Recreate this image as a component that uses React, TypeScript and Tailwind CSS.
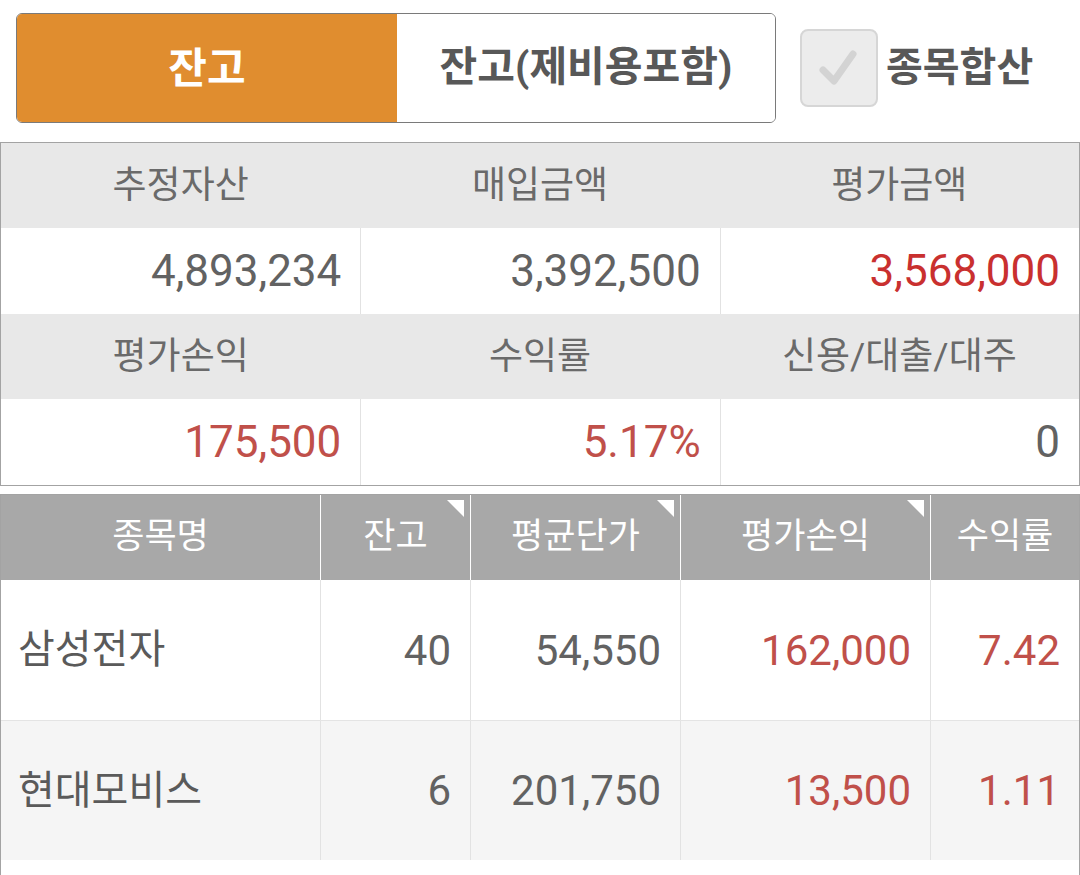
const FONT = "font-['Roboto','Noto_Sans_CJK_KR',sans-serif]";

type Cell = { label: string; value: string; tone?: "red" | "dark-red" };

const summary: Cell[][] = [
  [
    { label: "추정자산", value: "4,893,234" },
    { label: "매입금액", value: "3,392,500" },
    { label: "평가금액", value: "3,568,000", tone: "dark-red" },
  ],
  [
    { label: "평가손익", value: "175,500", tone: "red" },
    { label: "수익률", value: "5.17%", tone: "red" },
    { label: "신용/대출/대주", value: "0" },
  ],
];

const columns = [
  { label: "종목명", sort: false },
  { label: "잔고", sort: true },
  { label: "평균단가", sort: true },
  { label: "평가손익", sort: true },
  { label: "수익률", sort: false },
];

const holdings = [
  { name: "삼성전자", qty: "40", avg: "54,550", pnl: "162,000", rate: "7.42" },
  { name: "현대모비스", qty: "6", avg: "201,750", pnl: "13,500", rate: "1.11" },
];

function toneClass(tone?: Cell["tone"]) {
  if (tone === "dark-red") return "text-[#c9302f]";
  if (tone === "red") return "text-[#c0504a]";
  return "text-[#626262]";
}

function SortMark() {
  return (
    <svg
      className="absolute right-[6px] top-[5px]"
      width="17"
      height="17"
      viewBox="0 0 17 17"
    >
      <polygon points="0,0 17,0 17,17" fill="#fff" />
    </svg>
  );
}

export default function App() {
  return (
    <div className={`${FONT} h-[875px] w-[1080px] overflow-hidden bg-white`}>
      {/* tabs + checkbox */}
      <div className="flex items-center px-4 pt-[13px]">
        <div className="flex h-[110px] w-[760px] overflow-hidden rounded-[6px] border border-[#7a7a7a]">
          <div className="flex w-[380px] items-center justify-center bg-[#e08d2f] text-[42px] font-bold text-white">
            잔고
          </div>
          <div className="flex flex-1 items-center justify-center bg-white text-[41px] font-bold text-[#585858]">
            잔고(제비용포함)
          </div>
        </div>
        <div className="ml-[24px] flex h-[78px] w-[78px] items-center justify-center rounded-[8px] border-2 border-[#d6d6d6] bg-[#ececec]">
          <svg width="44" height="44" viewBox="0 0 44 44">
            <path
              d="M6 24 L17 35 L36 8"
              fill="none"
              stroke="#d3d3d3"
              strokeWidth="7"
              strokeLinecap="round"
              strokeLinejoin="round"
            />
          </svg>
        </div>
        <div className="ml-[8px] text-[40px] font-bold text-[#585858]">종목합산</div>
      </div>

      {/* summary */}
      <div className="mt-[19px] border border-[#a3a3a3]">
        {summary.map((row, ri) => (
          <div key={ri}>
            <div className="grid h-[85px] grid-cols-3 bg-[#e8e8e8]">
              {row.map((c) => (
                <div
                  key={c.label}
                  className="flex items-center justify-center text-[37px] text-[#6a6a6a]"
                >
                  {c.label}
                </div>
              ))}
            </div>
            <div className="grid h-[86px] grid-cols-3 bg-white">
              {row.map((c, ci) => (
                <div
                  key={c.label}
                  className={`flex items-center justify-end pr-[19px] text-[44px] ${toneClass(c.tone)} ${
                    ci > 0 ? "border-l border-[#e2e2e2]" : ""
                  }`}
                >
                  {c.value}
                </div>
              ))}
            </div>
          </div>
        ))}
      </div>

      {/* holdings */}
      <div className="mt-[8px] h-[400px] border-x border-t border-[#a3a3a3]">
        <div className="grid h-[85px] grid-cols-[319px_150px_210px_250px_1fr] bg-[#a8a8a8]">
          {columns.map((c, i) => (
            <div
              key={c.label}
              className={`relative flex items-center justify-center text-[35px] text-white ${
                i > 0 ? "border-l border-white" : ""
              }`}
            >
              {c.label}
              {c.sort && <SortMark />}
            </div>
          ))}
        </div>
        {holdings.map((h, i) => (
          <div
            key={h.name}
            className={`grid h-[140px] grid-cols-[319px_150px_210px_250px_1fr] text-[42px] ${
              i % 2 === 1 ? "border-t border-[#e4e4e4] bg-[#f5f5f5]" : "bg-white"
            }`}
          >
            <div className="flex items-center pl-[17px] text-[40px] text-[#5a5a5a]">{h.name}</div>
            <div className="flex items-center justify-end border-l border-[#e2e2e2] pr-[19px] text-[#626262]">
              {h.qty}
            </div>
            <div className="flex items-center justify-end border-l border-[#e2e2e2] pr-[19px] text-[#626262]">
              {h.avg}
            </div>
            <div className="flex items-center justify-end border-l border-[#e2e2e2] pr-[19px] text-[#c0504a]">
              {h.pnl}
            </div>
            <div className="flex items-center justify-end border-l border-[#e2e2e2] pr-[19px] text-[#c0504a]">
              {h.rate}
            </div>
          </div>
        ))}
      </div>
    </div>
  );
}
